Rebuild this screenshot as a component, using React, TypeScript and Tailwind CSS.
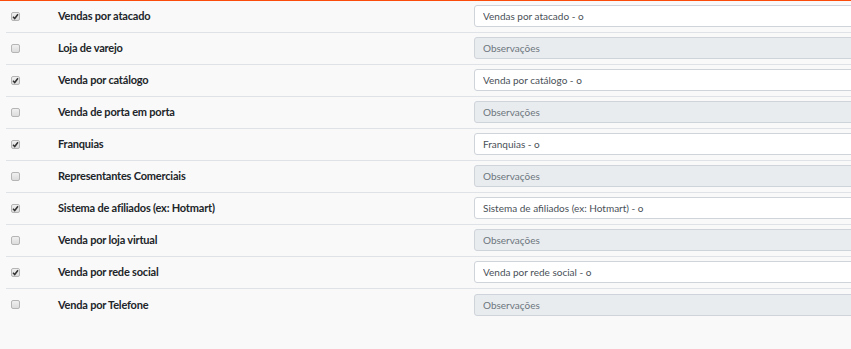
import { useState } from "react";

const canais = [
  { label: "Vendas por atacado", checked: true },
  { label: "Loja de varejo", checked: false },
  { label: "Venda por catálogo", checked: true },
  { label: "Venda de porta em porta", checked: false },
  { label: "Franquias", checked: true },
  { label: "Representantes Comerciais", checked: false },
  { label: "Sistema de afiliados (ex: Hotmart)", checked: true },
  { label: "Venda por loja virtual", checked: false },
  { label: "Venda por rede social", checked: true },
  { label: "Venda por Telefone", checked: false },
];

const CheckBox = ({ checked, onClick }: { checked: boolean; onClick: () => void }) => (
  <button
    onClick={onClick}
    className="w-[9px] h-[9px] rounded-[2px] border border-[#b5b5b5] bg-gradient-to-b from-[#f0f0f0] to-[#dcdcdc] flex items-center justify-center p-0"
  >
    {checked && (
      <svg width="7" height="7" viewBox="0 0 7 7">
        <path d="M1 3.8 L2.7 5.5 L6 1.2" stroke="#333" strokeWidth="1.5" fill="none" />
      </svg>
    )}
  </button>
);

export default function App() {
  const [items, setItems] = useState(canais);

  const toggle = (idx: number) =>
    setItems((prev) => prev.map((it, i) => (i === idx ? { ...it, checked: !it.checked } : it)));

  return (
    <div className="w-[851px] h-[349px] overflow-hidden bg-[#f9f9f9] border-t border-[#fb4c0c]">
      <div className="pl-[6px]">
        {items.map((item, i) => (
          <div
            key={item.label}
            className={`flex items-center h-[32px] ${i < items.length - 1 ? "border-b border-[#dfe2e6]" : ""}`}
          >
            <div className="w-[52px] shrink-0 pl-[5px] flex items-center -mt-[1px]">
              <CheckBox checked={item.checked} onClick={() => toggle(i)} />
            </div>
            <div className="w-[416px] shrink-0 text-[11px] font-bold tracking-[-0.2px] text-[#212529] font-['Lato','Liberation_Sans',sans-serif]">
              {item.label}
            </div>
            <input
              type="text"
              disabled={!item.checked}
              defaultValue={item.checked ? `${item.label} - o` : ""}
              placeholder="Observações"
              className="w-[420px] shrink-0 h-[22px] -mt-[1px] rounded-[3px] border border-[#ced4da] px-[8px] text-[10px] text-[#495057] placeholder:text-[#6c757d] bg-white disabled:bg-[#e9ecef] outline-none font-['Lato','Liberation_Sans',sans-serif]"
            />
          </div>
        ))}
      </div>
    </div>
  );
}
